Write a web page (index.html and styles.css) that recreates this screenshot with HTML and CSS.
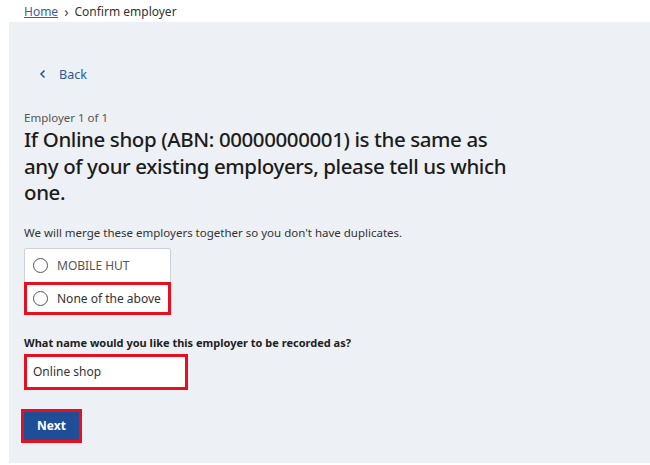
FILE: index.html
```html
<!DOCTYPE html>
<html lang="en">
<head>
    <meta charset="UTF-8">
    <meta name="viewport" content="width=device-width, initial-scale=1.0">
    <title>Confirm employer</title>
    <link rel="stylesheet" href="styles.css">
</head>
<body>
    <nav class="breadcrumb">
        <a href="#" class="crumb-link">Home</a>
        <span class="crumb-sep">&#8250;</span>
        <span class="crumb-current">Confirm employer</span>
    </nav>
    <main class="panel">
        <a href="#" class="back-link">
            <svg class="back-icon" width="8" height="10" viewBox="0 0 8 10">
                <path d="M5.5 1.5 L2 5 L5.5 8.5" fill="none" stroke="#2a5a9e" stroke-width="1.6"/>
            </svg>
            <span>Back</span>
        </a>
        <form class="form">
            <p class="step">Employer 1 of 1</p>
            <h1 class="heading">If Online shop (ABN: 00000000001) is the same as any of your existing employers, please tell us which one.</h1>
            <p class="hint">We will merge these employers together so you don't have duplicates.</p>
            <div class="radio-group">
                <label class="radio-option">
                    <span class="radio-circle"></span>
                    <span class="radio-text caps">MOBILE HUT</span>
                </label>
                <label class="radio-option highlight">
                    <span class="radio-circle"></span>
                    <span class="radio-text">None of the above</span>
                </label>
            </div>
            <label class="field-label" for="empname">What name would you like this employer to be recorded as?</label>
            <div class="input-wrap highlight">
                <input id="empname" class="input-field" type="text" value="Online shop">
            </div>
            <div class="btn-wrap highlight">
                <button type="button" class="next-btn">Next</button>
            </div>
        </form>
    </main>
</body>
</html>
```

FILE: styles.css
```css
body, html {
    margin: 0;
    padding: 0;
    background: #ffffff;
    font-family: "Noto Sans", "Open Sans", sans-serif;
    color: #1c1c1c;
}
.breadcrumb {
    height: 22px;
    padding-left: 24px;
    font-size: 12px;
    line-height: 21px;
    display: flex;
    align-items: center;
    gap: 6px;
}
.crumb-link {
    color: #3a5f9a;
    text-decoration: underline;
}
.crumb-sep {
    color: #444;
    font-size: 14px;
}
.crumb-current {
    color: #333;
}
.panel {
    margin-left: 9px;
    background-color: #edf0f4;
    height: 441px;
    padding: 0 15px;
    box-sizing: border-box;
}
.back-link {
    display: flex;
    align-items: center;
    gap: 12px;
    padding: 43px 0 0 15px;
    height: 18px;
    color: #2a5a9e;
    text-decoration: none;
    font-size: 12.5px;
}
.form {
    margin-top: 27px;
}
.step {
    margin: 0;
    font-size: 11.5px;
    color: #555;
    line-height: 16px;
}
.heading {
    margin: 0;
    max-width: 490px;
    font-size: 20.5px;
    letter-spacing: -0.4px;
    font-weight: 500;
    line-height: 26.5px;
    color: #1c1c1c;
}
.hint {
    margin: 19px 0 7px 0;
    font-size: 11.5px;
    line-height: 16px;
    color: #333;
}
.radio-group {
    width: 145px;
    background: #fff;
    border: 1px solid #ccd2d9;
    border-radius: 2px;
}
.radio-option {
    display: flex;
    align-items: center;
    gap: 9px;
    height: 33px;
    padding-left: 8px;
    box-sizing: border-box;
    font-size: 12px;
    color: #333;
}
.radio-circle {
    width: 15px;
    height: 15px;
    border: 1.5px solid #555;
    border-radius: 50%;
    box-sizing: border-box;
}
.caps {
    color: #555;
}
.highlight {
    outline: 3px solid #e8101f;
    outline-offset: -3px;
}
.radio-option.highlight {
    margin: 0 -1px -1px -1px;
    padding-left: 9px;
}
.field-label {
    display: block;
    margin-top: 20px;
    font-size: 11px;
    font-weight: 700;
    color: #222;
    line-height: 16px;
}
.input-wrap {
    margin-top: 3px;
    width: 164px;
    height: 36px;
    background: #fff;
    box-sizing: border-box;
    padding: 3px;
    display: flex;
    align-items: center;
}
.input-field {
    border: none;
    outline: none;
    background: none;
    font-family: inherit;
    font-size: 12px;
    color: #333;
    padding-left: 6px;
    width: 100%;
}
.btn-wrap {
    margin: 19px 0 0 -3px;
    width: 61px;
    height: 34px;
    box-sizing: border-box;
    padding: 3px;
}
.next-btn {
    width: 100%;
    height: 100%;
    border: none;
    background-color: #1f4e96;
    color: #fff;
    font-family: inherit;
    font-weight: 700;
    font-size: 12px;
    cursor: pointer;
}
```
